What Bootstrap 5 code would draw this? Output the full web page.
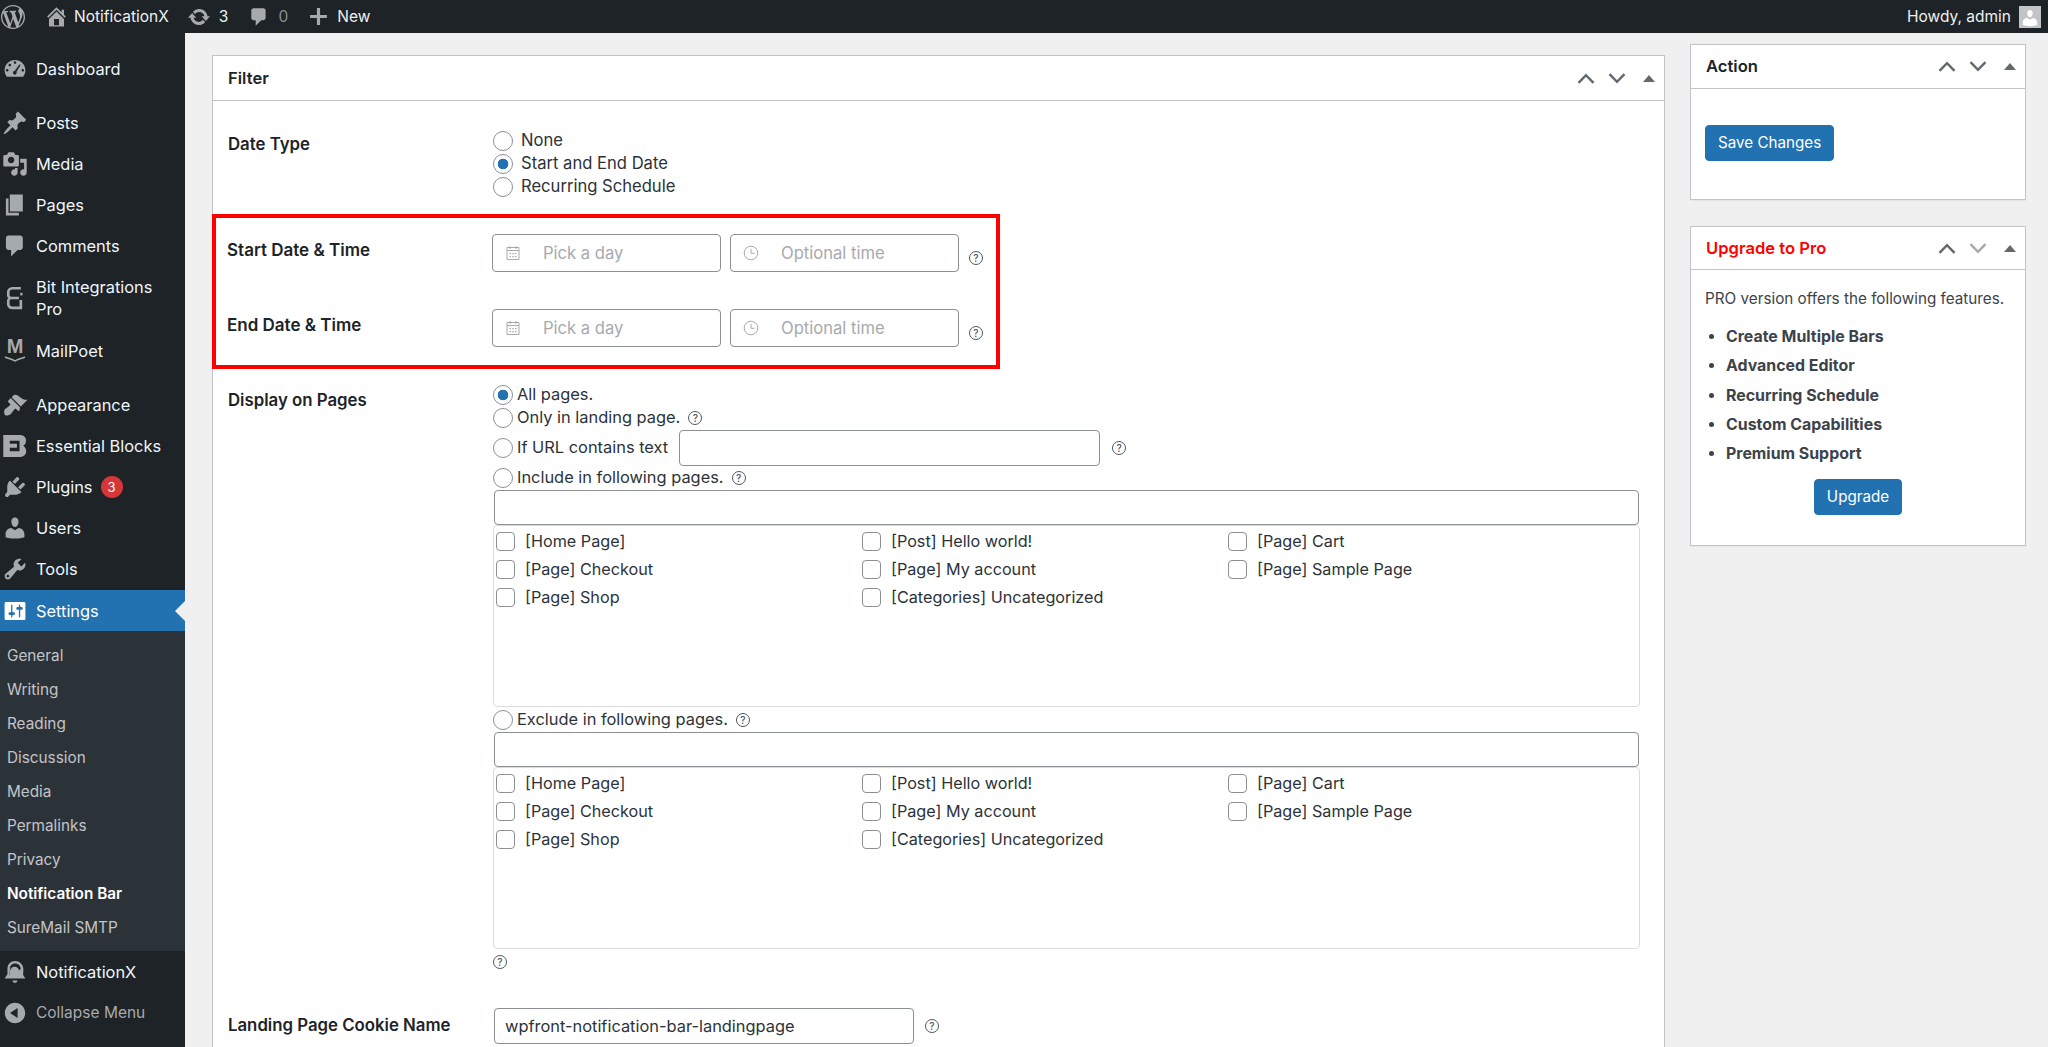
<!DOCTYPE html>
<html lang="en">
<head>
<meta charset="UTF-8">
<title>Notification Bar</title>
<link href="https://cdn.jsdelivr.net/npm/bootstrap@5.3.2/dist/css/bootstrap.min.css" rel="stylesheet">
<style>
    html, body { height: 100%; overflow: hidden; }
    body { background: #f0f0f1; font-family: Inter, "Liberation Sans", sans-serif; font-size: 16px; color: #2c3338; }
    .dash { fill: currentColor; display: block; }

    /* admin bar */
    .wp-bar { height: 33px; background: #1d2327; color: #f0f0f1; font-size: 15.5px; padding: 0 7px 0 1px; }
    .wp-bar .dim { color: #8c8f94; }
    .wp-bar .ico { color: #a7aaad; }
    .bar-home { margin-left: 19px; }
    .bar-title { margin-left: 5px; }
    .bar-update { margin-left: 18px; }
    .bar-comment { margin-left: 20px; }
    .bar-plus { margin-left: 20px; }
    .bar-avatar { width: 22px; height: 22px; background: #c3c4c7; overflow: hidden; color: #fff; }

    /* side menu */
    .wp-shell { height: calc(100vh - 33px); }
    .wp-side { width: 185px; flex: none; background: #1d2327; padding-top: 15px; color: #f0f6fc; font-size: 16.4px; }
    .side-item { height: 41.2px; padding-left: 36px; position: relative; display: flex; align-items: center; line-height: 22px; color: #f0f6fc; }
    .side-item .dash { position: absolute; left: 2px; top: 50%; margin-top: -13px; width: 26px; height: 26px; color: #a7aaad; }
    .side-item.tall { height: 63px; }
    .side-gap { height: 13px; }
    .side-item.current { background: #2271b1; color: #fff; }
    .side-item.current .dash { color: #fff; }
    .side-item.current::after { content: ""; position: absolute; right: 0; top: 50%; margin-top: -10px; border: 10px solid transparent; border-right-color: #f0f0f1; border-left-width: 0; }
    .mp-mark { position: absolute; left: 2px; width: 26px; top: 6px; text-align: center; font: 700 20px/20px "Liberation Sans", sans-serif; color: #a7aaad; }
    .side-item .mp-smile { position: absolute; left: 4px; top: 26px; width: 22px; height: 6px; margin: 0; fill: none; stroke: #a7aaad; stroke-width: 1.5; }
    .side-sub { background: #2c3338; padding: 7.5px 0 6.5px; font-size: 15.3px; color: #c3c4c7; }
    .side-sub div { height: 34px; line-height: 34px; padding-left: 7px; }
    .side-sub .active-sub { color: #fff; font-weight: 600; }
    .side-collapse { color: #a7aaad; font-size: 15.5px; }
    .plugin-count { background: #d63638; color: #fff; width: 22px; height: 22px; border-radius: 50%; padding: 0; margin-left: 8px; font-size: 13px; font-weight: 400; line-height: 22px; }

    /* main columns */
    .wp-main { flex: 1; padding: 11px 22px 0 27px; gap: 25px; min-width: 0; }
    .col-left { width: 1453px; flex: none; padding-top: 11px; }
    .col-right { width: 336px; flex: none; }
    .wp-box { border: 1px solid #c3c4c7; border-radius: 0; box-shadow: 0 1px 1px rgba(0,0,0,.04); }
    .wp-box .card-header { background: #fff; border-bottom: 1px solid #c3c4c7; border-radius: 0; padding: 0 15px; font-size: 16.6px; font-weight: 600; color: #1d2327; }
    .head-filter { height: 45px; }
    .head-action { height: 44px; }
    .head-upgrade { height: 43px; }
    .box-handles { color: #646970; gap: 13px; margin-right: -6px; }
    .box-handles .off { color: #a7aaad; }
    .tri { width: 0; height: 0; border-left: 6px solid transparent; border-right: 6px solid transparent; border-bottom: 7px solid #646970; margin-left: 4px; }
    .text-pro { color: #f00; }

    /* form rows */
    .field-label { width: 265px; flex: none; font-weight: 600; color: #1d2327; line-height: 20px; font-size: 16.8px; }
    .opt-line { height: 23px; font-size: 16.4px; color: #2c3338; }
    .form-check-input { margin: 0; flex: none; border: 1px solid #8c8f94; }
    .form-check-input[type=radio] { width: 20px; height: 20px; }
    .form-check-input[type=checkbox] { width: 19px; height: 19px; border-radius: 4px; }
    .form-check-input:checked[type=radio] { background-color: #fff; border-color: #8c8f94; background-size: auto; background-image: radial-gradient(circle, #2271b1 0 5px, transparent 5.6px); }
    .wp-input { border: 1px solid #8c8f94; border-radius: 4px; color: #2c3338; font-size: 16.4px; padding: 0 10px; }
    .wp-input::placeholder { color: #a7aaad; }
    .date-type-row { padding: 28px 0 0 15px; height: 113px; }
    .date-type-row .field-label { padding-top: 5px; }
    .date-type-row .opt-line { font-size: 16.6px; }
    .red-frame { width: 788px; height: 155px; margin-left: -1px; border: 4px solid #f00; padding: 16px 0 0 11px; }
    .date-row { height: 74.5px; }
    .date-row .field-label { padding-top: 6px; font-size: 17px; }
    .date-wrap { width: 229px; height: 38px; position: relative; }
    .date-wrap .wp-input { height: 38px; padding-left: 50px; font-size: 16.6px; }
    .date-wrap svg { position: absolute; left: 13px; top: 11px; color: #a7aaad; }
    .date-wrap + .date-wrap { margin-left: 9px; }
    .hint { width: 14px; height: 14px; border: 1px solid #50575e; border-radius: 50%; color: #50575e; font-size: 10px; line-height: 12px; text-align: center; flex: none; display: inline-block; font-weight: 500; }
    .hint-near { margin-left: 4px; }
    .help-date { margin: 17px 0 0 10px; }
    .display-row { padding: 14px 0 0 15px; }
    .pages-label { padding-top: 7px; }
    .tall-line { height: 24.5px; }
    .only-line { height: 23.5px; }
    .exclude-line { height: 25px; }
    .url-line { height: 36px; font-size: 16.4px; color: #2c3338; }
    .url-input { width: 421px; height: 36px; margin-left: 7px; }
    .search-input { width: 1145px; height: 35px; margin-left: 1px; }
    .pick-list { width: 1147px; height: 182px; border: 1px solid #dcdcde; border-radius: 4px; padding: 1px 2px; flex-wrap: wrap; align-content: flex-start; }
    .pick-list > div { width: 366px; height: 28px; gap: 10px; font-size: 16.2px; color: #2c3338; }
    .help-line { height: 14px; margin-top: 4px; line-height: 14px; }
    .cookie-row { padding: 0 0 40px 15px; margin-top: 41px; }
    .cookie-row .field-label { margin-top: -3px; }
    .cookie-input { width: 420px; height: 36px; margin-left: 1px; }
    .hint-cookie { margin-left: 11px; }

    /* boxes on the right */
    .wp-btn { background: #2271b1; border: 1px solid #2271b1; color: #fff; border-radius: 4px; font-size: 15.2px; height: 36px; padding: 0 12px; line-height: 32px; }
    .pro-list { margin: 12px 0 0; padding: 0 0 0 21px; font-weight: 700; color: #3c434a; font-size: 15.9px; }
    .pro-list li { height: 29.3px; line-height: 29.3px; }
    .pro-text { color: #3c434a; font-size: 15.25px; line-height: 22px; white-space: nowrap; }
    .action-box { height: 156px; }
    .action-body { padding: 36px 14px 0; }
    .upgrade-box { margin-top: 26px; height: 320px; }
    .upgrade-body { padding: 18px 14px 0; }
    .upgrade-body .text-center { margin-top: 11px; }
</style>
</head>
<body>
<svg width="0" height="0" class="position-absolute">
    <symbol id="i-wp" viewBox="0 0 20 20"><path d="M20 10c0-5.51-4.49-10-10-10C4.48 0 0 4.49 0 10c0 5.52 4.48 10 10 10 5.51 0 10-4.48 10-10zM7.78 15.37L4.37 6.22c.55-.02 1.17-.08 1.17-.08.5-.06.44-1.13-.06-1.11 0 0-1.45.11-2.37.11-.18 0-.37 0-.58-.01C4.12 2.69 6.87 1.11 10 1.11c2.33 0 4.45.87 6.05 2.34-.68-.11-1.65.39-1.65 1.58 0 .74.45 1.36.9 2.1.35.61.55 1.36.55 2.46 0 1.49-1.4 5-1.4 5l-3.03-8.37c.54-.02.82-.17.82-.17.5-.05.44-1.25-.06-1.22 0 0-1.44.12-2.38.12-.87 0-2.33-.12-2.33-.12-.5-.03-.56 1.2-.06 1.22l.92.08 1.26 3.41zM17.41 10c.24-.64.74-1.87.43-4.25.7 1.29 1.05 2.71 1.05 4.25 0 3.29-1.73 6.24-4.4 7.78.97-2.59 1.94-5.2 2.92-7.78zM6.1 18.09C3.12 16.65 1.11 13.53 1.11 10c0-1.3.23-2.48.72-3.59C3.25 10.3 4.67 14.2 6.1 18.09zm4.03-6.63l2.58 6.98c-.86.29-1.76.45-2.71.45-.79 0-1.57-.11-2.29-.33.81-2.38 1.62-4.74 2.42-7.1z"/></symbol>
    <symbol id="i-home" viewBox="0 0 20 20"><path d="M16 8.5l1.53 1.53-1.06 1.06L10 4.62l-6.47 6.47-1.06-1.06L10 2.5l4 4v-2h2v4zm-6-2.46l6 5.99V18H4v-5.97zM12 17v-5H8v5h4z"/></symbol>
    <symbol id="i-update" viewBox="0 0 20 20"><path d="M10.2 3.28c3.53 0 6.43 2.61 6.92 6h2.08l-3.5 4-3.5-4h2.32c-.45-1.97-2.21-3.45-4.32-3.45-1.45 0-2.73.71-3.54 1.78L4.95 5.66C6.23 4.2 8.11 3.28 10.2 3.28zm-.4 13.44c-3.52 0-6.43-2.61-6.92-6H.8l3.5-4c1.17 1.33 2.33 2.67 3.5 4H5.48c.45 1.97 2.21 3.45 4.32 3.45 1.45 0 2.73-.71 3.54-1.78l1.71 1.95c-1.28 1.46-3.15 2.38-5.25 2.38z"/></symbol>
    <symbol id="i-comment" viewBox="0 0 20 20"><path d="M5 2h9c1.1 0 2 .9 2 2v7c0 1.1-.9 2-2 2h-2l-5 5v-5H5c-1.1 0-2-.9-2-2V4c0-1.1.9-2 2-2z"/></symbol>
    <symbol id="i-plus" viewBox="0 0 20 20"><path d="M18 8.5v3h-6.500V18h-3v-6.500H2v-3h6.500V2h3v6.500z"/></symbol>
    <symbol id="i-dash" viewBox="0 0 20 20"><path fill-rule="evenodd" d="M3.76 16h12.48c1.1-1.37 1.76-3.11 1.76-5 0-4.42-3.58-8-8-8s-8 3.580-8 8c0 1.890.66 3.630 1.760 5zM10 4c.55 0 1 .45 1 1s-.45 1-1 1-1-.45-1-1 .45-1 1-1zM6 6c.55 0 1 .45 1 1s-.45 1-1 1-1-.45-1-1 .45-1 1-1zm8.010.58c.23.2.27.5.11.74l-2.950 4.830c.37.9-.06 2.200-1.170 2.200-.83 0-1.500-.67-1.500-1.500 0-.8.6-1.450 1.400-1.500l3.380-4.600c.18-.26.500-.36.730-.17zM4 10c.55 0 1 .45 1 1s-.45 1-1 1-1-.45-1-1 .45-1 1-1zm12 0c.55 0 1 .45 1 1s-.45 1-1 1-1-.45-1-1 .45-1 1-1z"/></symbol>
    <symbol id="i-pin" viewBox="0 0 20 20"><path d="M10.44 3.02l1.82-1.82 6.36 6.35-1.83 1.82c-1.05-.68-2.48-.57-3.41.36l-.75.75c-.92.93-1.04 2.35-.35 3.41l-1.83 1.82-2.41-2.41-2.8 2.79c-.42.42-3.38 2.71-3.8 2.29s1.86-3.39 2.28-3.81l2.79-2.79L4.1 9.36l1.83-1.82c1.05.69 2.48.57 3.4-.36l.75-.75c.93-.92 1.05-2.35.36-3.41z"/></symbol>
    <symbol id="i-media" viewBox="0 0 20 20"><path d="M13 11V4c0-.55-.45-1-1-1h-1.670L9 1H5L3.670 3H2c-.55 0-1 .45-1 1v7c0 .55.45 1 1 1h10c.55 0 1-.45 1-1zM7 4.500c1.380 0 2.500 1.120 2.500 2.500S8.380 9.500 7 9.500 4.500 8.380 4.500 7 5.620 4.500 7 4.500zM14 6h5v10.500c0 1.380-1.120 2.500-2.500 2.500S14 17.880 14 16.500s1.120-2.500 2.500-2.500c.17 0 .34.02.5.05V9h-3V6zm-4 8.050V13h2v3.500c0 1.380-1.120 2.500-2.500 2.500S7 17.880 7 16.500 8.120 14 9.500 14c.17 0 .34.02.5.05z"/></symbol>
    <symbol id="i-page" viewBox="0 0 20 20"><path d="M6 15V2h10v13H6zm-1 1h8v2H3V5h2v11z"/></symbol>
    <symbol id="i-brush" viewBox="0 0 20 20"><path d="M14.480 11.060L7.410 3.990l1.500-1.500c.5-.56 2.300-.47 3.510.32 1.210.8 1.430 1.280 2.910 2.100 1.180.64 2.450 1.260 4.450.85zm-.71.71L6.700 4.700 4.930 6.470c-.39.39-.39 1.020 0 1.410l1.060 1.060c.39.39.39 1.030 0 1.420-.6.6-1.430 1.110-2.210 1.690-.35.26-.7.53-1.010.84C1.430 13.230 1.300 16.600 2.350 17.650c.89.880 3.160.43 4.750-1.170.31-.31.58-.66.84-1.010.58-.78 1.090-1.610 1.690-2.210.39-.39 1.030-.39 1.420 0l1.060 1.060c.39.39 1.020.39 1.410 0z"/></symbol>
    <symbol id="i-plug" viewBox="0 0 20 20"><path d="M13.110 4.360L9.870 7.600 8 5.730l3.240-3.240c.35-.34 1.050-.2 1.560.32.52.51.66 1.210.31 1.550zm-8 1.770l.91-1.120 9.010 9.010-1.190.84c-.71.71-2.630 1.160-3.820 1.160H6.140L4.900 17.260c-.59.59-1.540.59-2.120 0-.59-.58-.59-1.530 0-2.120l1.240-1.240v-3.880c0-1.130.4-3.190 1.090-3.890zm7.260 3.970l3.240-3.240c.34-.35 1.040-.21 1.550.31.52.51.66 1.210.31 1.550l-3.240 3.250z"/></symbol>
    <symbol id="i-users" viewBox="0 0 20 20"><path d="M10 9.250c-2.270 0-2.730-3.440-2.730-3.440C7 4.020 7.820 2 9.970 2c2.160 0 2.980 2.020 2.710 3.810 0 0-.41 3.440-2.680 3.440zm0 2.570L12.720 10c2.390 0 4.520 2.330 4.520 4.530v2.490s-3.650 1.130-7.240 1.130c-3.650 0-7.240-1.130-7.240-1.130v-2.490c0-2.250 1.940-4.480 4.470-4.480z"/></symbol>
    <symbol id="i-tools" viewBox="0 0 20 20"><path d="M16.680 9.770c-1.340 1.340-3.300 1.670-4.950.99l-5.410 6.520c-.99.99-2.590.99-3.580 0s-.99-2.590 0-3.570l6.520-5.420c-.68-1.650-.35-3.610.99-4.950 1.280-1.280 3.120-1.620 4.720-1.060l-2.890 2.890 2.820 2.820 2.860-2.870c.53 1.580.18 3.390-1.080 4.650zM3.810 16.210c.4.39 1.040.39 1.430 0 .4-.4.4-1.040 0-1.430-.39-.4-1.030-.4-1.430 0-.39.39-.39 1.030 0 1.430z"/></symbol>
    <symbol id="i-settings" viewBox="0 0 20 20"><path d="M18 16V4c0-.55-.45-1-1-1H3c-.55 0-1 .45-1 1v12c0 .55.45 1 1 1h14c.55 0 1-.45 1-1zM8 11h1c.55 0 1 .45 1 1s-.45 1-1 1H8v1.500c0 .28-.22.5-.5.5s-.5-.22-.5-.5V13H6c-.55 0-1-.45-1-1s.45-1 1-1h1V5.500c0-.28.22-.5.5-.5s.5.22.5.5V11zm5-2h-1c-.55 0-1-.45-1-1s.45-1 1-1h1V5.500c0-.28.22-.5.5-.5s.5.22.5.5V7h1c.55 0 1 .45 1 1s-.45 1-1 1h-1v5.500c0 .28-.22.5-.5.5s-.5-.22-.5-.5V9z"/></symbol>
    <symbol id="i-collapse" viewBox="0 0 20 20"><path d="M10 2.160c4.330 0 7.840 3.510 7.840 7.840s-3.510 7.840-7.840 7.840S2.160 14.330 2.160 10 5.710 2.160 10 2.160zm2 11.720V6.120L6.180 9.970z"/></symbol>
    <symbol id="i-bit" viewBox="0 0 20 20"><path d="M14.500 2.500H7.800a3 3 0 0 0-3 3v2.200a2.300 2.300 0 0 0 2.300 2.300H13M13 10H7.200a2.400 2.400 0 0 0-2.400 2.400v2.200a3 3 0 0 0 3 3h6.700v-6" fill="none" stroke="currentColor" stroke-width="2"/><rect x="14" y="6" width="1.800" height="2"/></symbol>
    <symbol id="i-blocks" viewBox="0 0 20 20"><path fill-rule="evenodd" d="M1 1.500h12.500c3 0 5 1.600 5 4.200 0 1.800-.9 3.300-2.200 4.200 1.400.8 2.300 2.300 2.300 4.200 0 2.900-2.200 4.400-5.100 4.400H1zM6 6v2.300h5.500v3H6V14h7.500V6z"/></symbol>
    <symbol id="i-nx" viewBox="0 0 20 20"><path d="M10 1.500c-3.400 0-5.800 2.500-5.800 6v4.300L2 15h16l-1.800-2.800.3-4.400C16.300 4 13.500 1.500 10 1.500zm0 2c2.400 0 4.300 1.700 4.400 4.200l-1.300 1.100C12.700 7 11.300 6 9.800 6 7.700 6 6.200 7.600 6.200 9.700v2.100L5.900 13l.2-5.300C6.100 5.200 7.700 3.500 10 3.500zM8 16.500h4c-.3 1.100-1 1.800-2 1.800s-1.700-.7-2-1.800z"/></symbol>
    <symbol id="i-chev-up" viewBox="0 0 18 11"><path d="M1.500 9.800L9 2.200l7.500 7.600" fill="none" stroke="currentColor" stroke-width="2.500"/></symbol>
    <symbol id="i-chev-down" viewBox="0 0 18 11"><path d="M1.500 1.200L9 8.800l7.500-7.600" fill="none" stroke="currentColor" stroke-width="2.500"/></symbol>
    <symbol id="i-cal" viewBox="0 0 16 16"><path d="M2 2.500h12v12H2zM2 5.500h12M5 1v3M11 1v3" fill="none" stroke="currentColor"/><path d="M4.500 8h1.500v1.200H4.500zM7.300 8h1.500v1.200H7.300zM10 8h1.500v1.200H10zM4.500 11h1.500v1.200H4.500zM7.300 11h1.500v1.200H7.300zM10 11h1.500v1.200H10z" fill="currentColor"/></symbol>
    <symbol id="i-clock" viewBox="0 0 16 16"><circle cx="8" cy="8" r="6.800" fill="none" stroke="currentColor"/><path d="M8 3.800V8.300h3.500" fill="none" stroke="currentColor"/></symbol>
</svg>

<div class="wp-bar d-flex align-items-center">
    <svg class="dash ico" width="24" height="24"><use href="#i-wp"/></svg>
    <svg class="dash ico bar-home" width="25" height="25"><use href="#i-home"/></svg>
    <span class="bar-title">NotificationX</span>
    <svg class="dash ico bar-update" width="24" height="24"><use href="#i-update"/></svg>
    <span class="ms-2">3</span>
    <svg class="dash ico bar-comment" width="22" height="22"><use href="#i-comment"/></svg>
    <span class="dim ms-2">0</span>
    <svg class="dash ico bar-plus" width="21" height="21"><use href="#i-plus"/></svg>
    <span class="ms-2">New</span>
    <span class="ms-auto me-2">Howdy, admin</span>
    <div class="bar-avatar d-flex justify-content-center align-items-end">
        <svg class="dash" width="20" height="20"><use href="#i-users"/></svg>
    </div>
</div>

<div class="wp-shell d-flex">
    <nav class="wp-side d-flex flex-column">
        <div class="side-item"><svg class="dash"><use href="#i-dash"/></svg>Dashboard</div>
        <div class="side-gap"></div>
        <div class="side-item"><svg class="dash"><use href="#i-pin"/></svg>Posts</div>
        <div class="side-item"><svg class="dash"><use href="#i-media"/></svg>Media</div>
        <div class="side-item"><svg class="dash"><use href="#i-page"/></svg>Pages</div>
        <div class="side-item"><svg class="dash"><use href="#i-comment"/></svg>Comments</div>
        <div class="side-item tall"><svg class="dash"><use href="#i-bit"/></svg><span>Bit Integrations<br>Pro</span></div>
        <div class="side-item">
            <span class="mp-mark">M</span>
            <svg class="mp-smile" viewBox="0 0 22 6"><path d="M1 1c3 1.500 7 2 10 4 3-2 7-2.500 10-4"/></svg>
            MailPoet
        </div>
        <div class="side-gap"></div>
        <div class="side-item"><svg class="dash"><use href="#i-brush"/></svg>Appearance</div>
        <div class="side-item"><svg class="dash"><use href="#i-blocks"/></svg>Essential Blocks</div>
        <div class="side-item"><svg class="dash"><use href="#i-plug"/></svg>Plugins <span class="badge plugin-count">3</span></div>
        <div class="side-item"><svg class="dash"><use href="#i-users"/></svg>Users</div>
        <div class="side-item"><svg class="dash"><use href="#i-tools"/></svg>Tools</div>
        <div class="side-item current"><svg class="dash"><use href="#i-settings"/></svg>Settings</div>
        <div class="side-sub">
            <div>General</div>
            <div>Writing</div>
            <div>Reading</div>
            <div>Discussion</div>
            <div>Media</div>
            <div>Permalinks</div>
            <div>Privacy</div>
            <div class="active-sub">Notification Bar</div>
            <div>SureMail SMTP</div>
        </div>
        <div class="side-item"><svg class="dash"><use href="#i-nx"/></svg>NotificationX</div>
        <div class="side-item side-collapse"><svg class="dash"><use href="#i-collapse"/></svg>Collapse Menu</div>
    </nav>

    <main class="wp-main d-flex align-items-start">
        <div class="col-left">
            <div class="card wp-box">
                <div class="card-header head-filter d-flex align-items-center justify-content-between">
                    Filter
                    <div class="box-handles d-flex align-items-center">
                        <svg class="dash" width="18" height="11"><use href="#i-chev-up"/></svg>
                        <svg class="dash" width="18" height="11"><use href="#i-chev-down"/></svg>
                        <span class="tri"></span>
                    </div>
                </div>
                <div class="card-body p-0">
                    <div class="d-flex date-type-row">
                        <div class="field-label">Date Type</div>
                        <div>
                            <div class="opt-line d-flex align-items-center gap-2"><input class="form-check-input" type="radio" name="dt">None</div>
                            <div class="opt-line d-flex align-items-center gap-2"><input class="form-check-input" type="radio" name="dt" checked>Start and End Date</div>
                            <div class="opt-line d-flex align-items-center gap-2"><input class="form-check-input" type="radio" name="dt">Recurring Schedule</div>
                        </div>
                    </div>

                    <div class="red-frame">
                        <div class="d-flex date-row">
                            <div class="field-label">Start Date &amp; Time</div>
                            <div class="date-wrap"><svg width="16" height="16"><use href="#i-cal"/></svg><input class="form-control wp-input" placeholder="Pick a day"></div>
                            <div class="date-wrap"><svg width="16" height="16"><use href="#i-clock"/></svg><input class="form-control wp-input" placeholder="Optional time"></div>
                            <span class="hint help-date">?</span>
                        </div>
                        <div class="d-flex date-row">
                            <div class="field-label">End Date &amp; Time</div>
                            <div class="date-wrap"><svg width="16" height="16"><use href="#i-cal"/></svg><input class="form-control wp-input" placeholder="Pick a day"></div>
                            <div class="date-wrap"><svg width="16" height="16"><use href="#i-clock"/></svg><input class="form-control wp-input" placeholder="Optional time"></div>
                            <span class="hint help-date">?</span>
                        </div>
                    </div>

                    <div class="d-flex display-row">
                        <div class="field-label pages-label">Display on Pages</div>
                        <div>
                            <div class="opt-line d-flex align-items-center gap-1"><input class="form-check-input" type="radio" name="pg" checked>All pages.</div>
                            <div class="opt-line only-line d-flex align-items-center gap-1"><input class="form-check-input" type="radio" name="pg">Only in landing page. <span class="hint hint-near">?</span></div>
                            <div class="url-line d-flex align-items-center gap-1"><input class="form-check-input" type="radio" name="pg">If URL contains text <input class="form-control wp-input url-input"><span class="hint ms-2">?</span></div>
                            <div class="opt-line tall-line d-flex align-items-center gap-1"><input class="form-check-input" type="radio" name="pg">Include in following pages. <span class="hint hint-near">?</span></div>
                            <input class="form-control wp-input search-input">
                            <div class="pick-list d-flex">
                                <div class="d-flex align-items-center"><input class="form-check-input" type="checkbox">[Home Page]</div>
                                <div class="d-flex align-items-center"><input class="form-check-input" type="checkbox">[Post] Hello world!</div>
                                <div class="d-flex align-items-center"><input class="form-check-input" type="checkbox">[Page] Cart</div>
                                <div class="d-flex align-items-center"><input class="form-check-input" type="checkbox">[Page] Checkout</div>
                                <div class="d-flex align-items-center"><input class="form-check-input" type="checkbox">[Page] My account</div>
                                <div class="d-flex align-items-center"><input class="form-check-input" type="checkbox">[Page] Sample Page</div>
                                <div class="d-flex align-items-center"><input class="form-check-input" type="checkbox">[Page] Shop</div>
                                <div class="d-flex align-items-center"><input class="form-check-input" type="checkbox">[Categories] Uncategorized</div>
                            </div>
                            <div class="opt-line exclude-line d-flex align-items-center gap-1"><input class="form-check-input" type="radio" name="pg">Exclude in following pages. <span class="hint hint-near">?</span></div>
                            <input class="form-control wp-input search-input">
                            <div class="pick-list d-flex">
                                <div class="d-flex align-items-center"><input class="form-check-input" type="checkbox">[Home Page]</div>
                                <div class="d-flex align-items-center"><input class="form-check-input" type="checkbox">[Post] Hello world!</div>
                                <div class="d-flex align-items-center"><input class="form-check-input" type="checkbox">[Page] Cart</div>
                                <div class="d-flex align-items-center"><input class="form-check-input" type="checkbox">[Page] Checkout</div>
                                <div class="d-flex align-items-center"><input class="form-check-input" type="checkbox">[Page] My account</div>
                                <div class="d-flex align-items-center"><input class="form-check-input" type="checkbox">[Page] Sample Page</div>
                                <div class="d-flex align-items-center"><input class="form-check-input" type="checkbox">[Page] Shop</div>
                                <div class="d-flex align-items-center"><input class="form-check-input" type="checkbox">[Categories] Uncategorized</div>
                            </div>
                            <div class="help-line"><span class="hint">?</span></div>
                        </div>
                    </div>

                    <div class="d-flex cookie-row align-items-center">
                        <div class="field-label">Landing Page Cookie Name</div>
                        <input class="form-control wp-input cookie-input" value="wpfront-notification-bar-landingpage">
                        <span class="hint hint-cookie">?</span>
                    </div>
                </div>
            </div>
        </div>

        <div class="col-right">
            <div class="card wp-box action-box">
                <div class="card-header head-action d-flex align-items-center justify-content-between">
                    Action
                    <div class="box-handles d-flex align-items-center">
                        <svg class="dash" width="18" height="11"><use href="#i-chev-up"/></svg>
                        <svg class="dash" width="18" height="11"><use href="#i-chev-down"/></svg>
                        <span class="tri"></span>
                    </div>
                </div>
                <div class="card-body action-body"><button class="btn wp-btn" type="button">Save Changes</button></div>
            </div>
            <div class="card wp-box upgrade-box">
                <div class="card-header head-upgrade d-flex align-items-center justify-content-between">
                    <span class="text-pro">Upgrade to Pro</span>
                    <div class="box-handles d-flex align-items-center">
                        <svg class="dash" width="18" height="11"><use href="#i-chev-up"/></svg>
                        <svg class="dash off" width="18" height="11"><use href="#i-chev-down"/></svg>
                        <span class="tri"></span>
                    </div>
                </div>
                <div class="card-body upgrade-body">
                    <div class="pro-text">PRO version offers the following features.</div>
                    <ul class="pro-list">
                        <li>Create Multiple Bars</li>
                        <li>Advanced Editor</li>
                        <li>Recurring Schedule</li>
                        <li>Custom Capabilities</li>
                        <li>Premium Support</li>
                    </ul>
                    <div class="text-center"><button class="btn wp-btn" type="button">Upgrade</button></div>
                </div>
            </div>
        </div>
    </main>
</div>
</body>
</html>
